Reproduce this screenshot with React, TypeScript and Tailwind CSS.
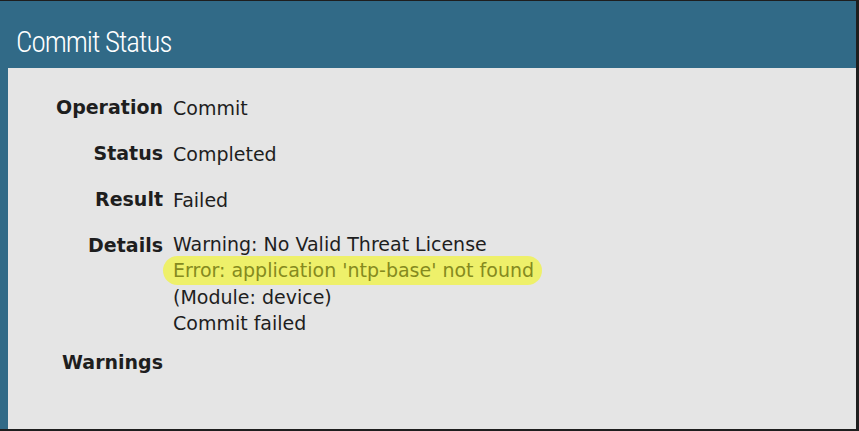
const rows = [
  { label: "Operation", lines: ["Commit"] },
  { label: "Status", lines: ["Completed"] },
  { label: "Result", lines: ["Failed"] },
];

export default function App() {
  return (
    <div className="w-[859px] h-[431px] bg-[#1e1e1e] pt-px">
      <div className="w-[856px] h-[428px] flex flex-col">
        <div className="h-[67px] bg-[#316a87] flex items-center pl-4 pt-[16px]">
          <h1 className="text-white text-[29px] font-light tracking-[-1px] font-['Liberation_Sans_Narrow','Roboto_Condensed',Roboto,sans-serif]">
            Commit Status
          </h1>
        </div>
        <div className="flex-1 border-l-8 border-[#316a87] bg-[#e5e5e5] pt-[27px] text-[#1e1e1e] font-['DejaVu_Sans',Verdana,sans-serif]">
          <div className="grid grid-cols-[155px_1fr] gap-x-[10px] gap-y-[20px] leading-[26px]">
            {rows.map((r) => (
              <div key={r.label} className="contents">
                <div className="text-right font-bold text-[19px] -mt-[1px]">{r.label}</div>
                <div className="text-[19px]">{r.lines[0]}</div>
              </div>
            ))}
            <div className="text-right font-bold text-[19px] -mt-[1px]">Details</div>
            <div className="text-[19px] leading-[26.3px] flex flex-col items-start -mt-[2px]">
              <span>Warning: No Valid Threat License</span>
              <span className="-ml-[10px] pl-[10px] pr-[8px] -my-px py-px rounded-full bg-[#eef06a] text-[#858a1e]">
                Error: application 'ntp-base' not found
              </span>
              <span>(Module: device)</span>
              <span>Commit failed</span>
            </div>
            <div className="text-right font-bold text-[19px] -mt-[7px]">Warnings</div>
            <div />
          </div>
        </div>
      </div>
    </div>
  );
}
